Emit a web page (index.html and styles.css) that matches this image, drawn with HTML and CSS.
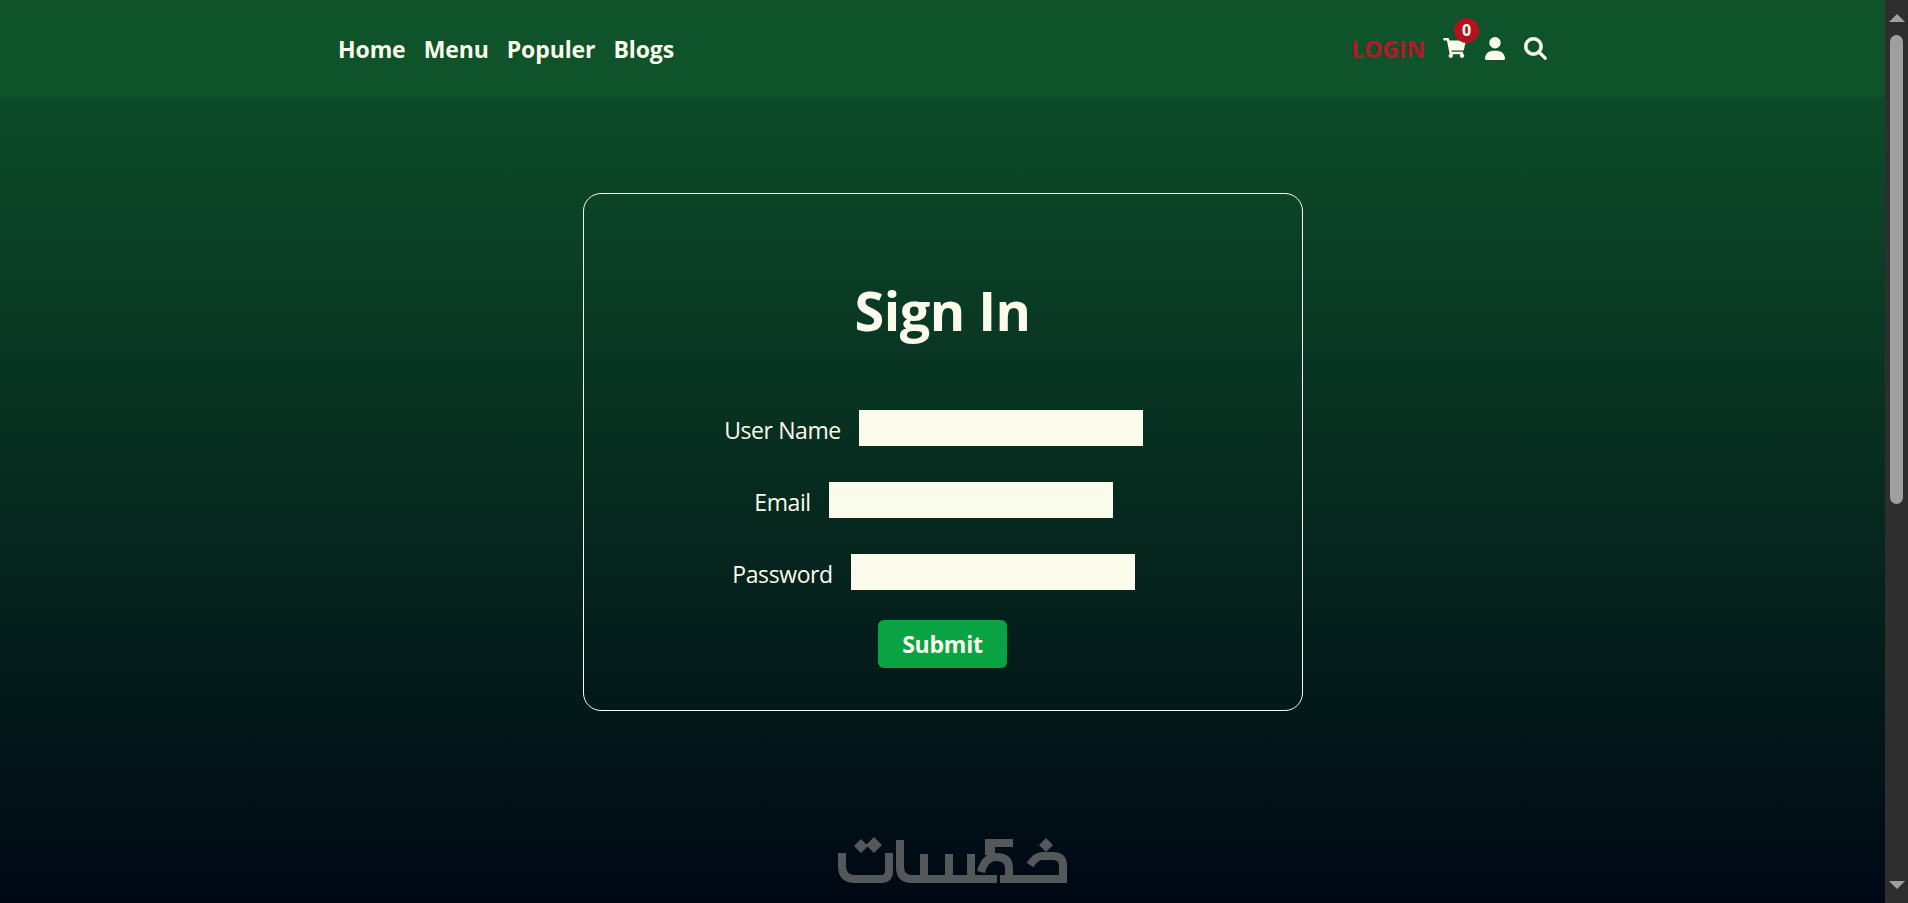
FILE: index.html
```html
<!DOCTYPE html>
<html lang="en">
<head>
  <meta charset="UTF-8" />
  <title>Sign In</title>
  <link rel="stylesheet" href="styles.css">
</head>
<body>

  <div class="page">
    <main class="content">
      <header>
        <nav class="nav-links">
          <a href="#">Home</a>
          <a href="#">Menu</a>
          <a href="#">Populer</a>
          <a href="#">Blogs</a>
        </nav>
        <div class="nav-tools">
          <a href="#" class="login-link">LOGIN</a>
          <a href="#" class="cart">
            <svg class="icon icon-cart" viewBox="0 0 576 512"><path d="M528.12 301.319l47.273-208C578.806 78.301 567.391 67 551.99 67H159.208l-9.166-44.81C147.758 10.021 136.991 0 124 0H24C10.745 0 0 10.745 0 24v16c0 13.255 10.745 24 24 24h69.883l70.248 343.435C147.325 417.1 136 435.222 136 456c0 30.928 25.072 56 56 56s56-25.072 56-56c0-15.674-6.447-29.835-16.824-40h209.647C430.447 426.165 424 440.326 424 456c0 30.928 25.072 56 56 56s56-25.072 56-56c0-22.172-12.888-41.332-31.579-50.405l5.517-24.276c3.413-15.018-8.002-29.319-23.403-29.319H218.117l-6.545-32h293.145c11.206 0 20.92-7.754 23.403-18.681z"/></svg>
            <span class="badge">0</span>
          </a>
          <a href="#">
            <svg class="icon icon-user" viewBox="0 0 448 512"><path d="M224 256A128 128 0 1 0 224 0a128 128 0 1 0 0 256zm-45.7 48C79.8 304 0 383.8 0 482.3C0 498.7 13.3 512 29.7 512H418.3c16.4 0 29.7-13.3 29.7-29.7C448 383.8 368.2 304 269.7 304H178.3z"/></svg>
          </a>
          <a href="#">
            <svg class="icon icon-search" viewBox="-8 -8 528 528"><path d="M416 208c0 45.9-14.9 88.3-40 122.7L502.6 457.4c12.5 12.5 12.5 32.8 0 45.3s-32.8 12.5-45.3 0L330.7 376c-34.4 25.2-76.8 40-122.7 40C93.1 416 0 322.9 0 208S93.1 0 208 0S416 93.1 416 208zM208 352a144 144 0 1 0 0-288 144 144 0 1 0 0 288z"/></svg>
          </a>
        </div>
      </header>

      <section class="card">
        <h1>Sign In</h1>
        <form>
          <div class="field"><label>User Name</label><input type="text" /></div>
          <div class="field"><label>Email</label><input type="email" /></div>
          <div class="field"><label>Password</label><input type="password" /></div>
          <button type="button" class="submit-btn">Submit</button>
        </form>
      </section>

      <!-- watermark -->
      <svg class="watermark" viewBox="830 832 245 60" role="img" aria-label="Khamsat logo">
        <g class="wm-stroke">
          <path d="M842 853V866Q842 879 855 879H881Q889 879 889 871V853"/>
          <path d="M900 840V867Q900 879 912 879H997"/>
          <path d="M924 854V879"/>
          <path d="M949 854V879"/>
          <path d="M971 854V879"/>
          <path d="M985 843H1013"/>
          <path class="wm-stem" d="M990 839V855"/>
          <path d="M981 872Q985 857 996 857Q1009 857 1009 868V879"/>
          <path d="M1000 879H1067"/>
          <path d="M1063 883V866Q1063 856 1053 856H1042Q1036 856 1030 865"/>
        </g>
        <path class="wm-fill" d="M861 839l7 7-7 7-7-7zM874 837l8 8-8 8-8-8zM1046 838l7 7-7 7-7-7z"/>
      </svg>
    </main>

    <!-- scrollbar -->
    <aside class="scrollbar">
      <span class="arrow arrow-up"></span>
      <div class="track"><div class="thumb"></div></div>
      <span class="arrow arrow-down"></span>
    </aside>
  </div>

</body>
</html>
```

FILE: styles.css
```css
* { box-sizing: border-box; }
html, body { height: 100%; }
body { margin: 0; background: #000814; color: #fbfbec; font-family: "Open Sans", "Noto Sans", Arial, sans-serif; overflow: hidden; }
a { color: inherit; text-decoration: none; }

.page { display: flex; height: 903px; }
.content { position: relative; flex: 1; background: linear-gradient(#0e542c, #000814); overflow: hidden; }

header { height: 97px; padding: 0 338px 0 338px; background: #0f532b; border-top: 1px solid #144c2c; display: flex; justify-content: space-between; align-items: center; }
.nav-links { display: flex; gap: 18px; font-size: 23px; font-weight: 700; letter-spacing: -0.1px; }
.nav-tools { display: flex; align-items: center; gap: 19px; padding-bottom: 2px; }
.nav-tools a { display: block; line-height: 0; }
.nav-tools .login-link { margin: 2px -1px 0 0; color: #b5172b; font-size: 23px; font-weight: 700; line-height: 32px; letter-spacing: -0.1px; }
.icon { display: block; fill: #fbfbec; }
.icon-cart { width: 23px; height: 20px; }
.icon-user { width: 20px; height: 23px; }
.icon-search { width: 23px; height: 23px; }
.icon-search path { stroke: #fbfbec; stroke-width: 16; }
.cart { position: relative; }
.badge { position: absolute; top: -20px; left: 11px; width: 25px; height: 25px; border-radius: 50%; background: #b5121f; font-size: 16px; font-weight: 700; line-height: 25px; text-align: center; }

.card { width: 720px; height: 518px; margin: 96px auto 0; padding-top: 80px; border: 1px solid #fbfbec; border-radius: 18px; }
h1 { margin: 0 0 64px; font-size: 54px; font-weight: 700; line-height: 72px; text-align: center; letter-spacing: -0.5px; }

form { display: flex; flex-direction: column; align-items: center; }
.field { display: flex; align-items: center; gap: 18px; margin-bottom: 36px; }
.field label { font-size: 23px; line-height: 36px; letter-spacing: -0.4px; position: relative; top: 2px; }
.field input { width: 284px; height: 36px; margin-right: 18px; padding: 0 4px; border: none; border-radius: 0; background: #fbfbec; }
.submit-btn { width: 129px; height: 48px; margin-top: -6px; background: #0aa344; color: #fbfbec; border: none; border-radius: 6px; font-family: inherit; font-size: 23px; font-weight: 700; letter-spacing: -0.2px; cursor: pointer; }

.watermark { position: absolute; left: 830px; top: 832px; width: 245px; height: 60px; }
.wm-stroke path { fill: none; stroke: #55585b; stroke-width: 8; }
.wm-stroke .wm-stem { stroke-width: 10; }
.wm-fill { fill: #55585b; }

.scrollbar { width: 23px; background: #2e2e2e; display: flex; flex-direction: column; align-items: center; }
.track { flex: 1; width: 100%; padding: 4px 5px 0; }
.thumb { height: 469px; background: #9f9f9f; border-radius: 7px; }
.arrow { display: block; width: 0; height: 0; flex: none; margin: 14px 0 9px; border-left: 8px solid transparent; border-right: 8px solid transparent; }
.arrow-up { border-bottom: 8px solid #9f9f9f; }
.arrow-down { margin: 9px 0 14px; border-top: 8px solid #9f9f9f; }
```
